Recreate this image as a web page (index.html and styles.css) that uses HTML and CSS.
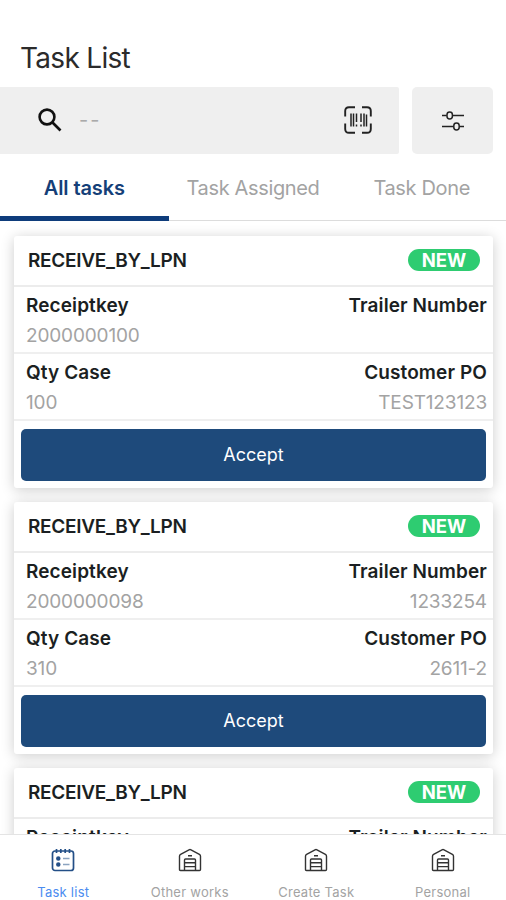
FILE: index.html
```html
<!DOCTYPE html>
<html lang="en">
<head>
    <meta charset="UTF-8">
    <meta name="viewport" content="width=device-width, initial-scale=1.0">
    <title>Task List</title>
    <link rel="stylesheet" href="styles.css">
</head>
<body>
    <svg width="0" height="0" class="sprite">
        <symbol id="warehouse" viewBox="0 0 24 24">
            <path d="M1.5 21.5V8.2Q1.5 7 2.6 6.4L11 1.8Q12 1.3 13 1.8L21.4 6.4Q22.5 7 22.5 8.2V21.5Q22.5 22.5 21.5 22.5H2.5Q1.5 22.5 1.5 21.5Z"/>
            <path d="M6.5 22V12Q6.5 11 7.5 11H16.5Q17.5 11 17.5 12V22M6.5 14.8H17.5M6.5 18.6H17.5M10 7.8H14"/>
        </symbol>
    </svg>

    <div class="app">
        <header>
            <h1>Task List</h1>
        </header>

        <div class="search-row">
            <div class="search-box">
                <svg class="search-icon" viewBox="0 0 24 24">
                    <circle cx="9" cy="9" r="7.4"/>
                    <path d="M14.5 14.5L22.5 22.5"/>
                </svg>
                <span class="placeholder">--</span>
                <svg class="scan-icon" viewBox="0 0 28 28">
                    <path d="M1.2 10.5V5Q1.2 1.2 5 1.2H11M18 1.2H23Q26.8 1.2 26.8 5V10.5M26.8 17.5V23Q26.8 26.8 23 26.8H18M11 26.8H5Q1.2 26.8 1.2 23V17.5"/>
                    <path class="bars" d="M7 7.5V20.5M9.5 7.5V20.5M12.5 7.5V16M12.5 18.5V20.5M17 7.5V16M17 18.5V20.5M20 7.5V20.5M22.5 8.5V20.5"/>
                </svg>
            </div>
            <div class="filter-btn">
                <svg viewBox="0 0 22 22">
                    <path d="M0 5.5H4.8M10.5 5.5H22M0 16.5H11.5M17.5 16.5H22"/>
                    <rect x="5" y="2" width="5.4" height="7" rx="2.7"/>
                    <rect x="11.8" y="13" width="5.4" height="7" rx="2.7"/>
                </svg>
            </div>
        </div>

        <nav class="tabs">
            <div class="tab active">All tasks</div>
            <div class="tab">Task Assigned</div>
            <div class="tab">Task Done</div>
        </nav>

        <main class="list">
            <div class="card">
                <div class="card-head">
                    <h2>RECEIVE_BY_LPN</h2>
                    <span class="badge">NEW</span>
                </div>
                <div class="row">
                    <div class="field">
                        <h3>Receiptkey</h3>
                        <p>2000000100</p>
                    </div>
                    <div class="field right">
                        <h3>Trailer Number</h3>
                    </div>
                </div>
                <div class="row">
                    <div class="field">
                        <h3>Qty Case</h3>
                        <p>100</p>
                    </div>
                    <div class="field right">
                        <h3>Customer PO</h3>
                        <p>TEST123123</p>
                    </div>
                </div>
                <button class="accept">Accept</button>
            </div>

            <div class="card">
                <div class="card-head">
                    <h2>RECEIVE_BY_LPN</h2>
                    <span class="badge">NEW</span>
                </div>
                <div class="row">
                    <div class="field">
                        <h3>Receiptkey</h3>
                        <p>2000000098</p>
                    </div>
                    <div class="field right">
                        <h3>Trailer Number</h3>
                        <p>1233254</p>
                    </div>
                </div>
                <div class="row">
                    <div class="field">
                        <h3>Qty Case</h3>
                        <p>310</p>
                    </div>
                    <div class="field right">
                        <h3>Customer PO</h3>
                        <p>2611-2</p>
                    </div>
                </div>
                <button class="accept">Accept</button>
            </div>

            <div class="card">
                <div class="card-head">
                    <h2>RECEIVE_BY_LPN</h2>
                    <span class="badge">NEW</span>
                </div>
                <div class="row">
                    <div class="field">
                        <h3>Receiptkey</h3>
                    </div>
                    <div class="field right">
                        <h3>Trailer Number</h3>
                    </div>
                </div>
            </div>
        </main>

        <footer>
            <div class="nav-item active">
                <svg viewBox="0 0 24 24">
                    <rect x="1.5" y="3" width="21" height="19.5" rx="2.5"/>
                    <path d="M5.5 1V5M9.8 1V5M14.2 1V5M18.5 1V5"/>
                    <path class="lines" d="M12 10.5H18.5M12 16.5H18.5"/>
                    <circle cx="7.3" cy="10.5" r="1.4"/>
                    <circle cx="7.3" cy="16.5" r="1.4"/>
                </svg>
                <span>Task list</span>
            </div>
            <div class="nav-item">
                <svg><use href="#warehouse"/></svg>
                <span>Other works</span>
            </div>
            <div class="nav-item">
                <svg><use href="#warehouse"/></svg>
                <span>Create Task</span>
            </div>
            <div class="nav-item">
                <svg><use href="#warehouse"/></svg>
                <span>Personal</span>
            </div>
        </footer>
    </div>
</body>
</html>
```

FILE: styles.css
```css
* {
    margin: 0;
    padding: 0;
    box-sizing: border-box;
    font-family: Inter, Roboto, sans-serif;
}

body {
    background: #fff;
    color: #1b1f22;
}

.sprite {
    display: none;
}

.app {
    display: flex;
    flex-direction: column;
    width: 506px;
    height: 900px;
    overflow: hidden;
}

header {
    flex: none;
    height: 87px;
    padding: 40px 20px 0;
}

h1 {
    font-size: 28px;
    font-weight: 400;
    line-height: 36px;
    letter-spacing: -0.7px;
    color: #2b2b2b;
}

.search-row {
    display: flex;
    flex: none;
    gap: 13px;
    height: 67px;
    padding-right: 13px;
}

.search-box {
    display: flex;
    align-items: center;
    flex: 1;
    padding: 0 27px 2px 38px;
    background: #efefef;
    border-radius: 0 2px 2px 0;
}

svg {
    fill: none;
    stroke: #222;
}

.search-icon {
    width: 24px;
    height: 24px;
    stroke: #111;
    stroke-width: 2.6;
}

.placeholder {
    flex: 1;
    padding-left: 17px;
    font-size: 20px;
    letter-spacing: 2px;
    color: #aaa;
}

.scan-icon {
    width: 28px;
    height: 28px;
    stroke-width: 1.9;
}

.scan-icon .bars {
    stroke-width: 1.5;
}

.filter-btn {
    display: flex;
    align-items: center;
    justify-content: center;
    width: 81px;
    background: #efefef;
    border-radius: 5px;
}

.filter-btn svg {
    width: 22px;
    height: 22px;
    stroke-width: 1.5;
}

.tabs {
    display: flex;
    flex: none;
    height: 67px;
    border-bottom: 1px solid #dcdcdc;
}

.tab {
    flex: 1;
    height: 67px;
    padding-top: 22px;
    text-align: center;
    font-size: 20px;
    line-height: 24px;
    letter-spacing: -0.35px;
    color: #a3a3a3;
}

.tab.active {
    color: #153f78;
    font-weight: 600;
    letter-spacing: -0.1px;
    border-bottom: 5px solid #0e3c7b;
}

.list {
    display: flex;
    flex-direction: column;
    flex: 1;
    gap: 14px;
    min-height: 0;
    padding: 15px 13px 0 14px;
    overflow: hidden;
}

.card {
    flex: none;
    height: 252px;
    background: #fff;
    border-radius: 3px;
    box-shadow: 0 2px 14px rgba(0, 0, 0, 0.2);
}

.card-head {
    display: flex;
    align-items: center;
    justify-content: space-between;
    height: 51px;
    padding: 0 13px 1px 14px;
    border-bottom: 2px solid #ececec;
}

h2 {
    font-size: 19px;
    font-weight: 600;
    letter-spacing: -0.28px;
}

.badge {
    width: 72px;
    height: 22px;
    border-radius: 11px;
    background: #2ecc71;
    color: #fff;
    font-size: 18.5px;
    font-weight: 700;
    line-height: 22px;
    text-align: center;
}

.row {
    display: flex;
    justify-content: space-between;
    height: 67px;
    padding: 5px 6px 0 12px;
    border-bottom: 2px solid #efefef;
}

.right {
    text-align: right;
}

h3 {
    font-size: 19px;
    font-weight: 600;
    line-height: 27px;
    letter-spacing: 0.1px;
}

.field p {
    margin-top: 3px;
    font-size: 19px;
    line-height: 27px;
    letter-spacing: -0.15px;
    color: #a3a3a3;
}

.accept {
    display: block;
    width: 465px;
    height: 52px;
    margin: 8px 7px 0;
    padding-bottom: 1px;
    border: 0;
    border-radius: 5px;
    background: #1e4a7b;
    color: #fff;
    font-size: 18px;
}

footer {
    display: flex;
    flex: none;
    height: 66px;
    border-top: 1px solid #e4e4e4;
    background: #fff;
}

.nav-item {
    display: flex;
    flex: 1;
    flex-direction: column;
    align-items: center;
    padding-top: 13px;
    font-size: 13px;
    line-height: 16px;
    letter-spacing: 0.25px;
    color: #a3a3a3;
}

.nav-item svg {
    width: 24px;
    height: 24px;
    margin-bottom: 12px;
    stroke: #333;
    stroke-width: 1.4;
}

.nav-item.active {
    color: #4b8cf0;
}

.nav-item.active svg {
    stroke: #234f87;
    stroke-width: 1.7;
}

.nav-item.active .lines {
    stroke: #8ba3c0;
}

.nav-item.active circle {
    fill: #234f87;
}
```
